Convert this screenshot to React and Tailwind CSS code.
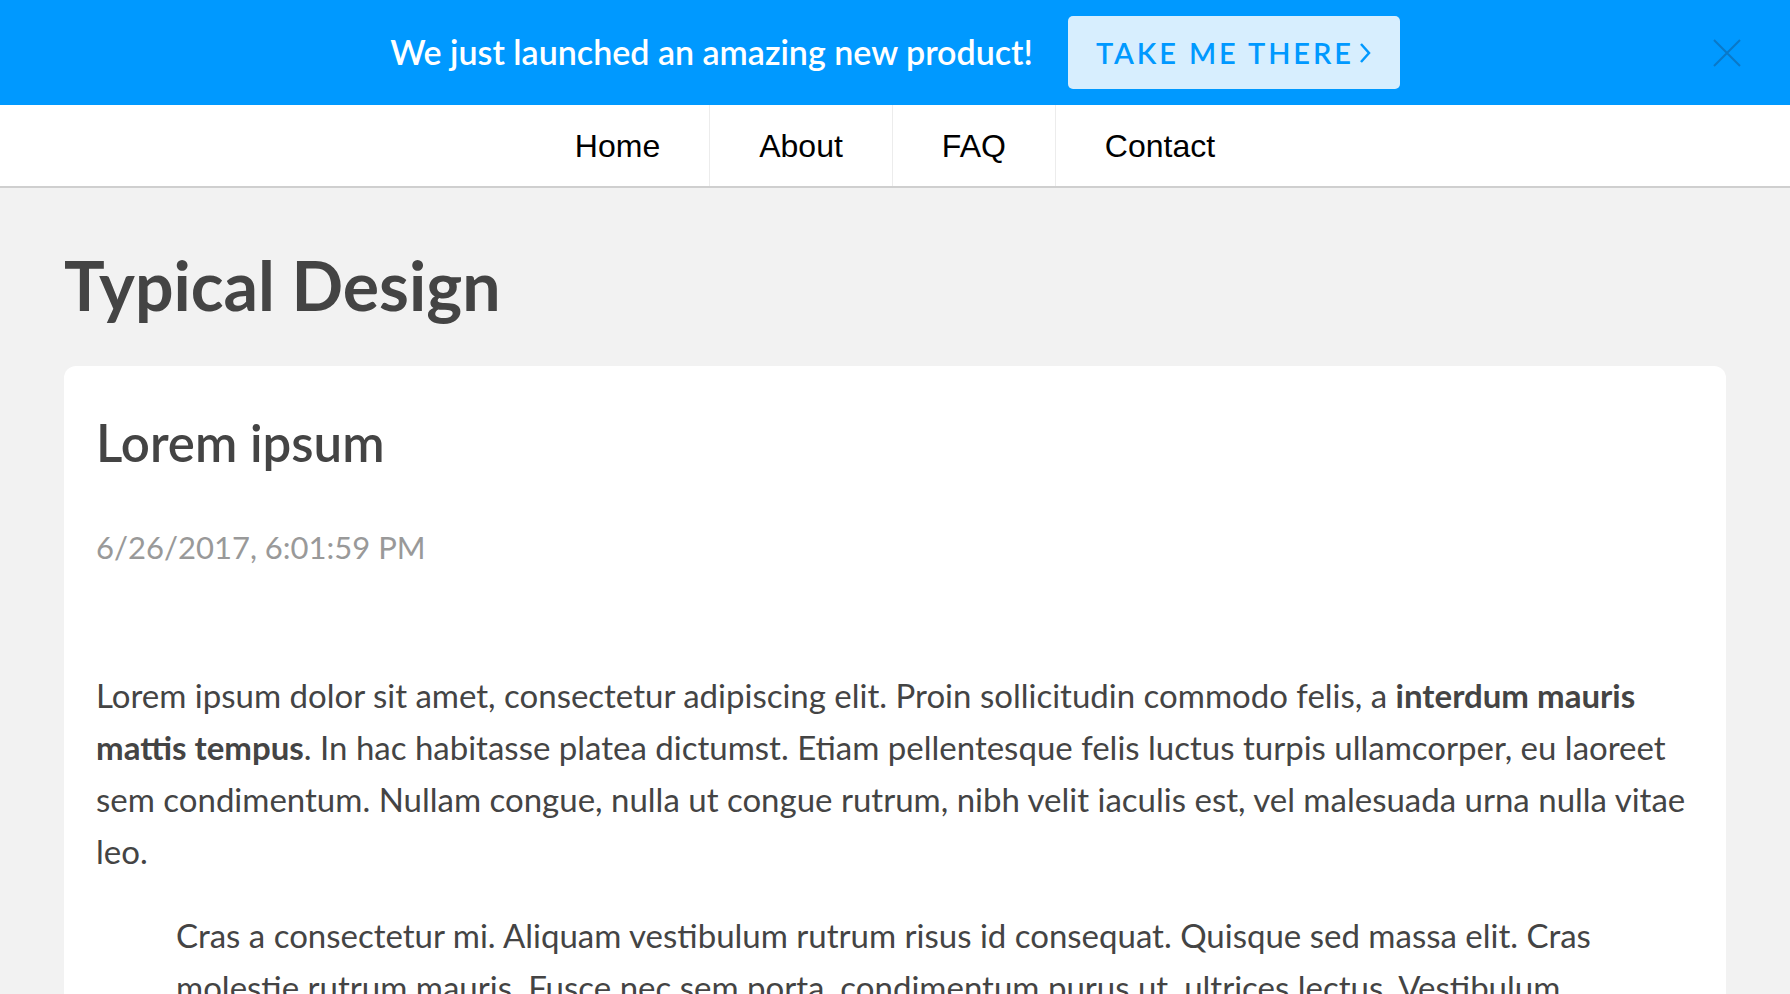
import React from "react";

const navLinks = ["Home", "About", "FAQ", "Contact"];

const AnnouncementBar = () => (
  <div className="relative flex h-[105px] items-center justify-center gap-[35px] bg-[#0099ff]">
    <p className="-mt-[3px] text-[34px] font-semibold text-white">
      We just launched an amazing new product!
    </p>
    <button
      type="button"
      className="flex h-[73px] w-[332px] items-center justify-center gap-1 rounded-[5px] bg-[#d7eefe] text-[29px] font-semibold tracking-[0.1em] text-[#0099ff]"
    >
      TAKE ME THERE
      <svg width="14" height="24" viewBox="0 0 14 24" fill="none">
        <path d="M3 3l8 9-8 9" stroke="currentColor" strokeWidth="2.5" />
      </svg>
    </button>
    <button
      type="button"
      aria-label="Close"
      className="absolute right-[48px] top-1/2 -translate-y-1/2 text-[#0a78c8]"
    >
      <svg width="30" height="30" viewBox="0 0 30 30" fill="none">
        <path d="M2 2l26 26M28 2L2 28" stroke="currentColor" strokeWidth="2" />
      </svg>
    </button>
  </div>
);

const NavBar = () => (
  <nav className="flex h-[83px] justify-center border-b-2 border-[#cfcfcf] bg-white">
    {navLinks.map((label, index) => (
      <a
        key={label}
        href="#"
        className={`flex items-center px-[49px] font-['Liberation_Sans',Arial,sans-serif] text-[32px] text-black ${
          index > 0 ? "border-l border-[#ececec]" : ""
        }`}
      >
        {label}
      </a>
    ))}
  </nav>
);

const Post = () => (
  <article className="rounded-[12px] bg-white px-8 pt-[45px] pb-10 text-[#444]">
    <h2 className="text-[51px] font-semibold leading-tight">Lorem ipsum</h2>
    <p className="mt-[50px] text-[31px] text-[#999]">6/26/2017, 6:01:59 PM</p>

    <div className="mt-[98px] text-[33px] leading-[52px]">
      <p>
        Lorem ipsum dolor sit amet, consectetur adipiscing elit. Proin
        sollicitudin commodo felis, a <strong>interdum mauris mattis tempus</strong>.
        In hac habitasse platea dictumst. Etiam pellentesque felis luctus turpis
        ullamcorper, eu laoreet sem condimentum. Nullam congue, nulla ut congue
        rutrum, nibh velit iaculis est, vel malesuada urna nulla vitae leo.
      </p>
      <blockquote className="mt-8 pl-20">
        Cras a consectetur mi. Aliquam vestibulum rutrum risus id consequat.
        Quisque sed massa elit. Cras molestie rutrum mauris. Fusce nec sem
        porta, condimentum purus ut, ultrices lectus. Vestibulum consectetur
        pellentesque augue, vitae tincidunt nisi pharetra nec.
      </blockquote>
    </div>
  </article>
);

export default function App() {
  return (
    <div className="min-h-screen bg-[#f2f2f2] font-['Lato','Open_Sans',sans-serif]">
      <AnnouncementBar />
      <NavBar />
      <main className="px-16 pt-[56px] pb-16">
        <h1 className="mb-[40px] text-[68px] font-bold leading-[1.2] text-[#444]">
          Typical Design
        </h1>
        <Post />
      </main>
    </div>
  );
}
